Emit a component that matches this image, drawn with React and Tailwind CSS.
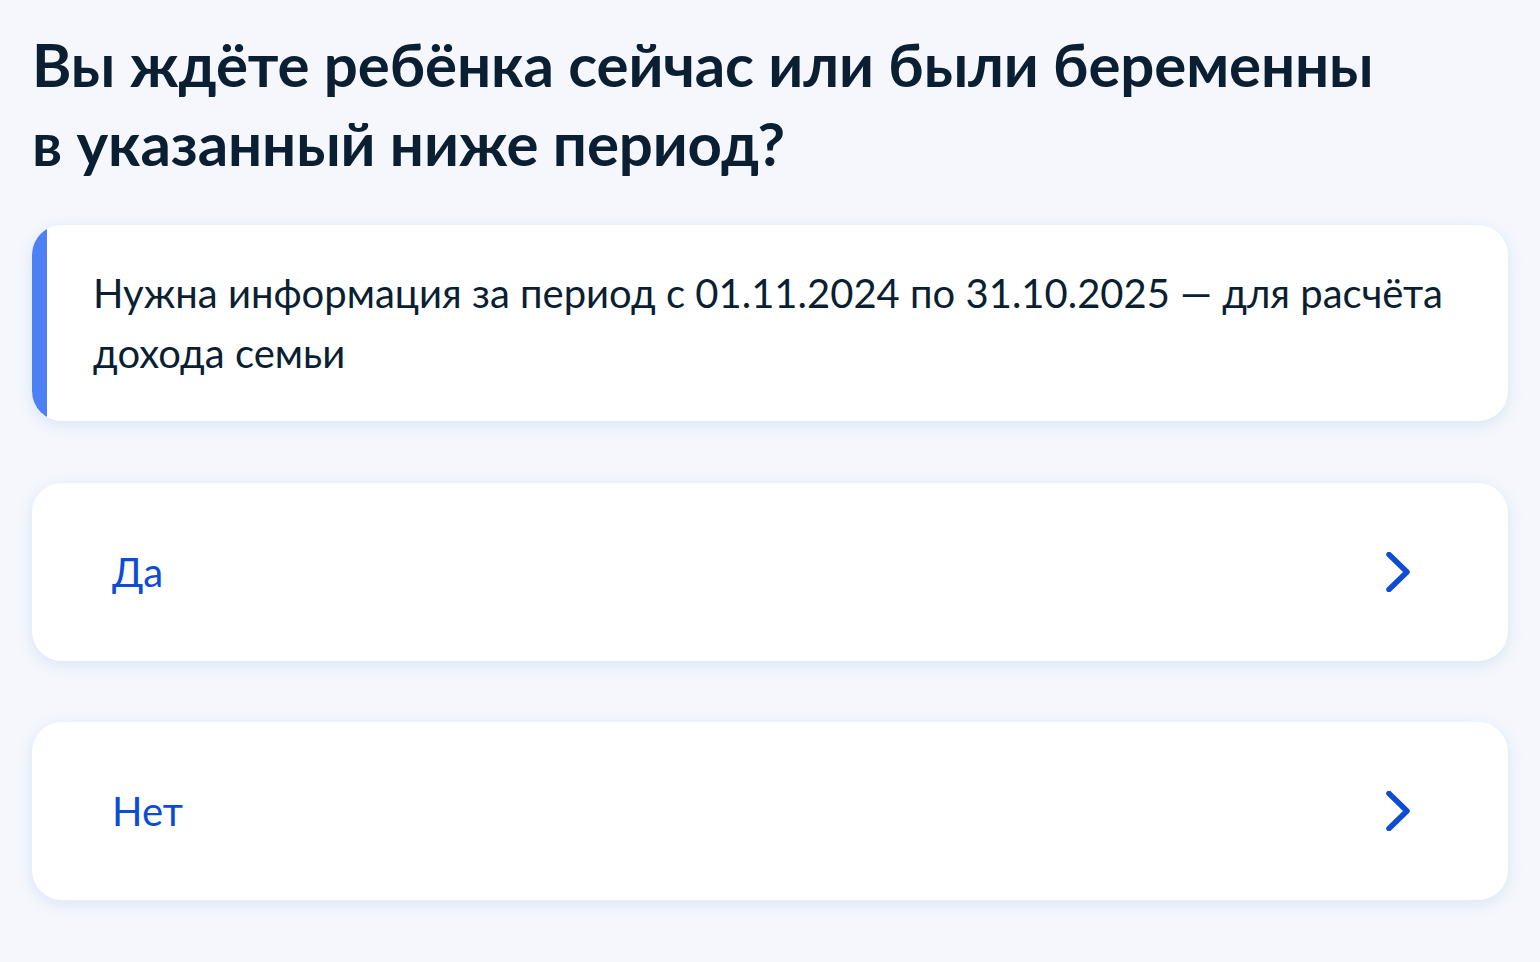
import React from 'react'

const options = ['Да', 'Нет']

function Chevron() {
  return (
    <svg width="40" height="40" viewBox="0 0 40 40" fill="none">
      <path
        d="M10 2.5 L28 20 L10 37.5"
        stroke="#0d4cd3"
        strokeWidth="5.5"
        strokeLinecap="round"
        strokeLinejoin="round"
      />
    </svg>
  )
}

export default function App() {
  return (
    <div
      className="min-h-[962px] w-full bg-[#f5f7fc] px-8 pt-[25px] text-[#0b1f33]"
      style={{ fontFamily: 'Lato, "Noto Sans", sans-serif' }}
    >
      <h1 className="text-[60px] font-bold leading-[79px] tracking-[-0.12px]">
        Вы ждёте ребёнка сейчас или были беременны
        <br />
        в указанный ниже период?
      </h1>

      {/* info block */}
      <div className="mt-[42px] flex overflow-hidden rounded-[30px] bg-white shadow-[0_4px_16px_rgba(102,150,220,0.18)]">
        <div className="w-[15px] shrink-0 bg-[#4d7ff5]" />
        <p className="py-[38px] pl-[46px] pr-10 text-[40px] leading-[60px]">
          Нужна информация за период с 01.11.2024 по 31.10.2025 — для расчёта
          <br />
          дохода семьи
        </p>
      </div>

      {/* answers */}
      <div className="mt-[62px] flex flex-col gap-[61px]">
        {options.map((o) => (
          <button
            key={o}
            className="flex h-[178px] w-full items-center justify-between rounded-[30px] bg-white pl-[80px] pr-[89px] text-left shadow-[0_4px_16px_rgba(102,150,220,0.18)]"
          >
            <span className="text-[40px] leading-[48px] text-[#0d4cd3]">{o}</span>
            <Chevron />
          </button>
        ))}
      </div>
    </div>
  )
}
